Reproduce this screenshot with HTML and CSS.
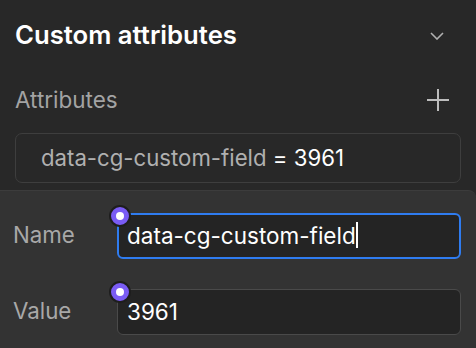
FILE: index.html
```html
<!DOCTYPE html>
<html lang="en">
<head>
    <meta charset="UTF-8">
    <title>Custom attributes</title>
    <link rel="stylesheet" href="styles.css">
</head>
<body>
    <section class="panel">
        <header class="panel-head">
            <h2>Custom attributes</h2>
            <svg class="chevron" width="14" height="8" viewBox="0 0 14 8">
                <path d="M1 1l6 6 6-6" fill="none" stroke="#b0b0b0" stroke-width="1.6"/>
            </svg>
        </header>

        <div class="sub-head">
            <span>Attributes</span>
            <svg class="plus" width="22" height="22" viewBox="0 0 22 22">
                <path d="M11 0v22M0 11h22" stroke="#bdbdbd" stroke-width="2"/>
            </svg>
        </div>

        <div class="attr-item">
            <span class="attr-name">data-cg-custom-field</span> = <span class="attr-value">3961</span>
        </div>
    </section>

    <div class="popover">
        <div class="field">
            <label>Name</label>
            <div class="input focused">
                <span class="dot"></span>
                <span>data-cg-custom-field</span><span class="caret"></span>
            </div>
        </div>
        <div class="field">
            <label>Value</label>
            <div class="input">
                <span class="dot"></span>
                <span>3961</span>
            </div>
        </div>
    </div>
</body>
</html>
```

FILE: styles.css
```css
* {
    margin: 0;
    padding: 0;
    box-sizing: border-box;
}

body {
    font-family: Inter, "Noto Sans", sans-serif;
    background-color: #282828;
    color: #f2f2f2;
    width: 476px;
    height: 348px;
    overflow: hidden;
}

/* Section */
.panel {
    padding: 0 15px;
}

.panel-head {
    height: 72px;
    padding-bottom: 3px;
    display: flex;
    align-items: center;
    justify-content: space-between;
}

.panel-head h2 {
    font-size: 25.7px;
    font-weight: 600;
    color: #ffffff;
}

.chevron {
    margin-right: 17px;
    margin-top: 3px;
}

.sub-head {
    height: 56px;
    padding-bottom: 2px;
    display: flex;
    align-items: center;
    justify-content: space-between;
    color: #a3a3a3;
    font-size: 22.5px;
}

.plus {
    margin-right: 12px;
    margin-top: 2px;
}

.attr-item {
    margin-top: 5px;
    height: 50px;
    border: 1px solid #3e3e3e;
    border-radius: 7px;
    display: flex;
    align-items: center;
    padding-left: 25px;
    padding-bottom: 1px;
    font-size: 22.2px;
    color: #ffffff;
    white-space: pre;
}

.attr-name {
    color: #b0b0b0;
}

/* Popover with name/value fields */
.popover {
    margin-top: 7px;
    background-color: #333333;
    border-top: 1px solid #3c3c3c;
    border-top-right-radius: 8px;
    padding: 22px 15px 0 13px;
    height: 158px;
}

.field {
    display: flex;
    align-items: center;
    margin-bottom: 30px;
}

.field label {
    width: 104px;
    padding-bottom: 3px;
    font-size: 22.3px;
    color: #a8a8a8;
}

.input {
    position: relative;
    flex: 1;
    height: 46px;
    border: 1px solid #4a4a4a;
    border-radius: 6px;
    background-color: #242424;
    display: flex;
    align-items: center;
    padding-left: 9px;
    padding-bottom: 2px;
    font-size: 22.5px;
    color: #ffffff;
}

.input.focused {
    border: 2px solid #2f7cf0;
    padding-left: 8px;
}

.caret {
    display: inline-block;
    width: 2px;
    height: 26px;
    background-color: #ffffff;
}

.dot {
    position: absolute;
    left: -9px;
    top: -9px;
    width: 22px;
    height: 22px;
    border-radius: 50%;
    background-color: #7a5cf5;
    border: 2px solid #1e1e1e;
}

.input.focused .dot {
    left: -10px;
    top: -10px;
}

.dot::after {
    content: "";
    position: absolute;
    left: 5px;
    top: 5px;
    width: 8px;
    height: 8px;
    border-radius: 50%;
    background-color: #ffffff;
}
```
